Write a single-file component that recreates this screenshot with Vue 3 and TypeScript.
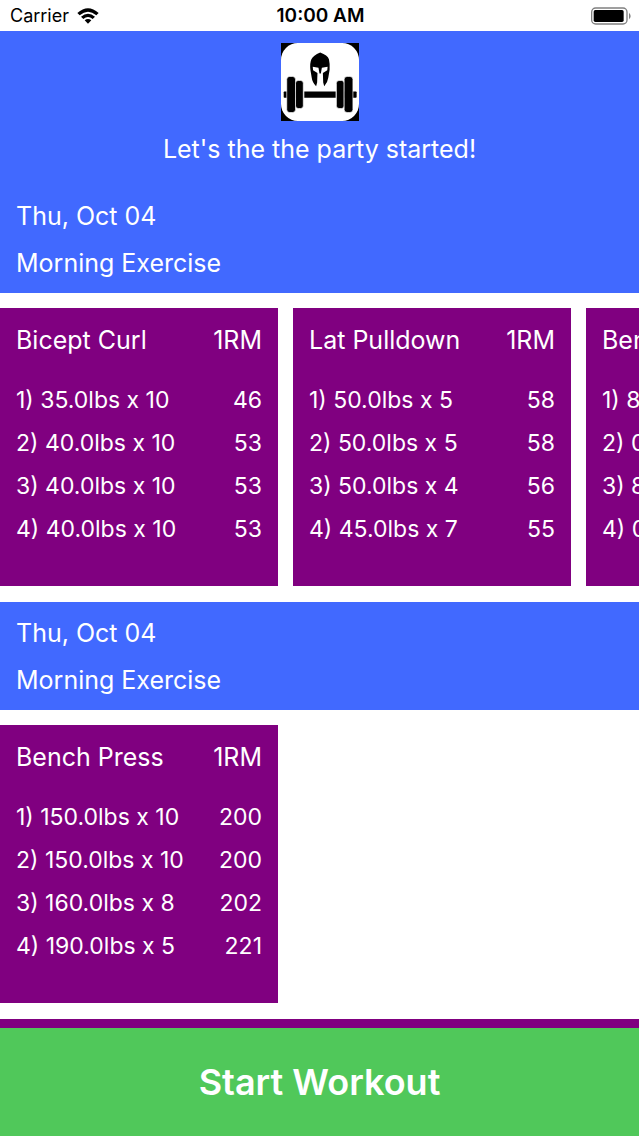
<script setup lang="ts">
interface WorkoutSet {
  load: string
  max: number | string
}
interface Exercise {
  name: string
  sets: WorkoutSet[]
}
interface Workout {
  id: number
  date: string
  title: string
  exercises: Exercise[]
}

const workouts: Workout[] = [
  {
    id: 1,
    date: 'Thu, Oct 04',
    title: 'Morning Exercise',
    exercises: [
      {
        name: 'Bicept Curl',
        sets: [
          { load: '35.0lbs x 10', max: 46 },
          { load: '40.0lbs x 10', max: 53 },
          { load: '40.0lbs x 10', max: 53 },
          { load: '40.0lbs x 10', max: 53 },
        ],
      },
      {
        name: 'Lat Pulldown',
        sets: [
          { load: '50.0lbs x 5', max: 58 },
          { load: '50.0lbs x 5', max: 58 },
          { load: '50.0lbs x 4', max: 56 },
          { load: '45.0lbs x 7', max: 55 },
        ],
      },
      {
        name: 'Bench Press',
        sets: [
          { load: '80.0lbs x 5', max: 93 },
          { load: '0.0lbs x 0', max: 0 },
          { load: '80.0lbs x 5', max: 93 },
          { load: '0.0lbs x 0', max: 0 },
        ],
      },
    ],
  },
  {
    id: 2,
    date: 'Thu, Oct 04',
    title: 'Morning Exercise',
    exercises: [
      {
        name: 'Bench Press',
        sets: [
          { load: '150.0lbs x 10', max: 200 },
          { load: '150.0lbs x 10', max: 200 },
          { load: '160.0lbs x 8', max: 202 },
          { load: '190.0lbs x 5', max: 221 },
        ],
      },
    ],
  },
]
</script>

<template>
  <div class="screen">
    <div class="status">
      <div class="carrier">
        <span>Carrier</span>
        <svg class="wifi" viewBox="0 0 66 48" aria-hidden="true">
          <path d="M1 15Q33-13 65 15L58 22Q33 0 8 22Z" />
          <path d="M12 26Q33 8 54 26L47 33Q33 21 19 33Z" />
          <path d="M23 37Q33 29 43 37L33 47Z" />
        </svg>
      </div>
      <time class="clock">10:00 AM</time>
      <div class="power">
        <svg class="battery" viewBox="0 0 120 52" aria-hidden="true">
          <rect x="2" y="2" width="106" height="48" rx="12" fill="#fff" stroke="#808080" stroke-width="4" />
          <rect x="8" y="8" width="90" height="36" rx="5" />
          <path d="M114 16Q124 26 114 36Z" fill="#808080" />
        </svg>
      </div>
    </div>

    <main class="feed">
      <header class="hero">
        <svg class="logo" viewBox="33 29 231 231" role="img" aria-label="Barbell and helmet">
          <rect x="33" y="29" width="231" height="231" />
          <rect x="33" y="29" width="231" height="231" rx="50" fill="#fff" />
          <path d="M149 57Q171 65 175 77Q178 89 177 108L173 132Q171 147 161 157L158 146L157 118L170 110L171 99L154 102L151 119H147L144 102L127 99L128 110L141 118L140 146L137 157Q126 147 124 132L120 108Q118 88 123 77Q128 66 149 57Z" />
          <rect x="41" y="173" width="216" height="18" rx="2" />
          <path d="M100 165V200M197 165V200" stroke="#fff" stroke-width="4" />
          <g stroke="#fff" stroke-width="2">
            <rect x="50" y="128" width="26" height="107" rx="9" />
            <rect x="76" y="140" width="23" height="83" rx="8" />
            <rect x="197" y="140" width="23" height="83" rx="8" />
            <rect x="220" y="128" width="26" height="107" rx="9" />
          </g>
        </svg>
        <p class="greeting">Let's the the party started!</p>
      </header>

      <section v-for="workout in workouts" :key="workout.id" class="workout">
        <div class="heading">
          <p>{{ workout.date }}</p>
          <h2>{{ workout.title }}</h2>
        </div>
        <div class="cards">
          <article v-for="exercise in workout.exercises" :key="exercise.name" class="card">
            <table>
              <thead>
                <tr>
                  <th scope="col">{{ exercise.name }}</th>
                  <th scope="col" class="max">1RM</th>
                </tr>
              </thead>
              <tbody>
                <tr v-for="(set, index) in exercise.sets" :key="index">
                  <td>{{ index + 1 }}) {{ set.load }}</td>
                  <td class="max">{{ set.max }}</td>
                </tr>
              </tbody>
            </table>
          </article>
        </div>
      </section>

      <div class="next"></div>
    </main>

    <button type="button" class="start">Start Workout</button>
  </div>
</template>

<style>
body {
  margin: 0;
  background: #fff;
}
</style>

<style scoped>
.screen {
  display: flex;
  flex-direction: column;
  height: 100vh;
  overflow: hidden;
  background: #fff;
  color: #fff;
  font-family: Inter, 'Liberation Sans', sans-serif;
}

p,
h2 {
  margin: 0;
  font-size: inherit;
  font-weight: 400;
}

.status {
  display: grid;
  grid-template-columns: 1fr auto 1fr;
  align-items: center;
  flex: none;
  height: 31px;
  padding: 0 8px 0 10px;
  color: #000;
  font-size: 18px;
}

.carrier {
  display: flex;
  align-items: center;
  gap: 8px;
}

.wifi {
  width: 22px;
  height: 16px;
}

.clock {
  font-size: 19px;
  font-weight: 600;
}

.power {
  display: flex;
  justify-content: flex-end;
}

.battery {
  width: 40px;
  height: 18px;
}

.feed {
  display: flex;
  flex: 1;
  flex-direction: column;
  min-height: 0;
  overflow: hidden;
}

.hero {
  display: flex;
  flex: none;
  flex-direction: column;
  align-items: center;
  padding: 12px 16px 8px;
  background: #4169ff;
  font-size: 25px;
  line-height: 56px;
}

.logo {
  width: 78px;
  height: 78px;
}

.workout {
  flex: none;
}

.heading {
  padding: 8px 16px 6px;
  background: #4169ff;
  font-size: 25px;
  line-height: 47px;
}

.cards {
  display: flex;
  gap: 15px;
  padding: 15px 0 16px;
  overflow-x: auto;
  scrollbar-width: none;
}

.card {
  box-sizing: border-box;
  flex: none;
  width: 278px;
  min-height: 278px;
  padding: 16px;
  background: #800080;
}

table {
  width: 100%;
  border-collapse: collapse;
}

th,
td {
  padding: 0;
  font-weight: 400;
  text-align: left;
  white-space: nowrap;
}

th {
  height: 54px;
  font-size: 25px;
  line-height: 32px;
  vertical-align: top;
}

td {
  height: 43px;
  font-size: 23px;
  line-height: 32px;
}

th.max,
td.max {
  text-align: right;
}

.next {
  flex: 1;
  background: #800080;
}

.start {
  flex: none;
  height: 108px;
  border: 0;
  background: #50c85a;
  color: #fff;
  font: inherit;
  font-size: 36px;
  font-weight: 600;
}
</style>
